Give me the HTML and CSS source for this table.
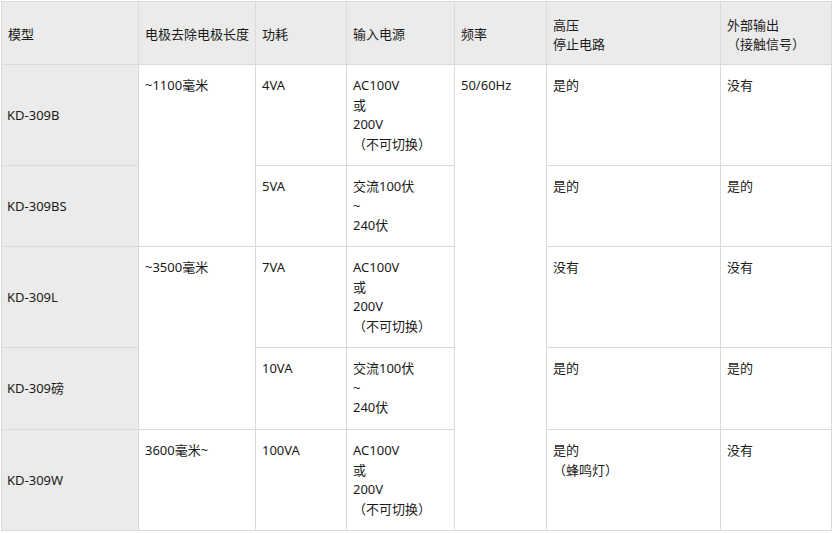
FILE: index.html
```html
<!DOCTYPE html>
<html lang="zh">
<head>
<meta charset="utf-8">
<title>规格</title>
<link rel="stylesheet" href="styles.css">
</head>
<body>
<table class="spec">
  <colgroup>
    <col class="c1"><col class="c2"><col class="c3"><col class="c4"><col class="c5"><col class="c6"><col class="c7">
  </colgroup>
  <thead>
    <tr class="r-head">
      <th>模型</th>
      <th>电极去除电极长度</th>
      <th>功耗</th>
      <th>输入电源</th>
      <th>频率</th>
      <th>高压<br>停止电路</th>
      <th>外部输出<br>（接触信号）</th>
    </tr>
  </thead>
  <tbody>
    <tr class="r-tall">
      <th class="model">KD-309B</th>
      <td rowspan="2">~1100毫米</td>
      <td>4VA</td>
      <td>AC100V<br>或<br>200V<br>（不可切换）</td>
      <td rowspan="5">50/60Hz</td>
      <td>是的</td>
      <td>没有</td>
    </tr>
    <tr class="r-short">
      <th class="model">KD-309BS</th>
      <td>5VA</td>
      <td>交流100伏<br>~<br>240伏</td>
      <td>是的</td>
      <td>是的</td>
    </tr>
    <tr class="r-tall">
      <th class="model">KD-309L</th>
      <td rowspan="2">~3500毫米</td>
      <td>7VA</td>
      <td>AC100V<br>或<br>200V<br>（不可切换）</td>
      <td>没有</td>
      <td>没有</td>
    </tr>
    <tr class="r-short2">
      <th class="model">KD-309磅</th>
      <td>10VA</td>
      <td>交流100伏<br>~<br>240伏</td>
      <td>是的</td>
      <td>是的</td>
    </tr>
    <tr class="r-tall">
      <th class="model">KD-309W</th>
      <td>3600毫米~</td>
      <td>100VA</td>
      <td>AC100V<br>或<br>200V<br>（不可切换）</td>
      <td>是的<br>（蜂鸣灯）</td>
      <td>没有</td>
    </tr>
  </tbody>
</table>
</body>
</html>
```

FILE: styles.css
```css
html, body {
  margin: 0;
  padding: 0;
  background: #ffffff;
}

body {
  padding: 1px 0 0 1px;
  font-family: "Noto Sans", "Noto Sans CJK SC", sans-serif;
  font-size: 13px;
  color: #1a1a1a;
}

.spec {
  border-collapse: separate;
  border-spacing: 0;
  table-layout: fixed;
  width: 831px;
  border-top: 1px solid #dadada;
  border-left: 1px solid #dadada;
}

.c1 { width: 137px; }
.c2 { width: 117px; }
.c3 { width: 91px; }
.c4 { width: 108px; }
.c5 { width: 92px; }
.c6 { width: 174px; }
.c7 { width: 111px; }

.spec th,
.spec td {
  box-sizing: border-box;
  border-right: 1px solid #dadada;
  border-bottom: 1px solid #dadada;
  padding: 11px 2px 10px 6px;
  line-height: 19.5px;
  text-align: left;
  font-weight: normal;
  vertical-align: top;
  white-space: nowrap;
}

.spec thead th {
  background: #ebebeb;
  vertical-align: middle;
  padding-top: 12px;
  padding-bottom: 8px;
}

.spec th.model {
  background: #ebebeb;
  vertical-align: middle;
  padding-left: 5px;
}

.r-head { height: 63px; }
.r-tall { height: 101px; }
.r-short { height: 81px; }
.r-short2 { height: 82px; }
```
